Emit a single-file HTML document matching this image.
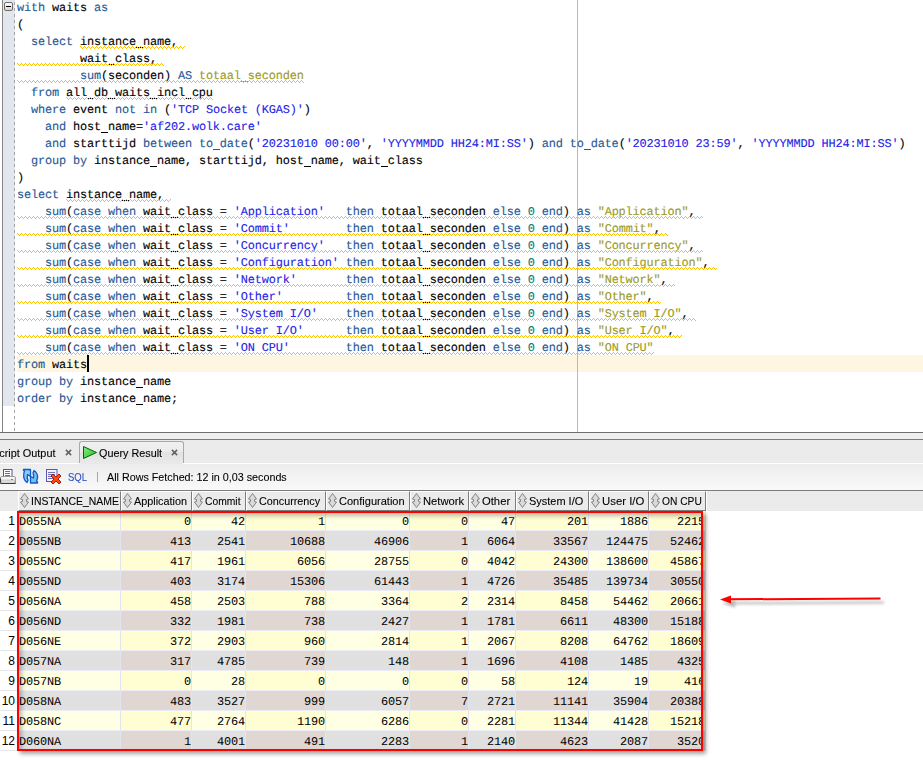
<!DOCTYPE html><html><head><meta charset="utf-8"><style>
*{margin:0;padding:0}
html,body{width:923px;height:766px;overflow:hidden;background:#fff;position:relative}
.abs{position:absolute}
.st{font-family:"Liberation Sans",sans-serif;line-height:13px;white-space:nowrap;transform-origin:0 0;-webkit-text-stroke:0.1px currentColor}
.ln{position:absolute;left:17px;height:17px;line-height:17px;white-space:pre;font-family:"Liberation Mono",monospace;font-size:11.9px;letter-spacing:-0.1412px;text-rendering:geometricPrecision;color:#000;-webkit-text-stroke:0.12px currentColor}
.hc{border-left:1px solid #fff;border-top:1px solid #fff;border-right:1px solid #7c7c7c;border-bottom:1px solid #7c7c7c;box-sizing:border-box}
.rn{left:0;width:17px;padding-right:2px;height:20px;line-height:21px;text-align:right;font-family:"Liberation Sans",sans-serif;font-size:12px;color:#000;border-bottom:1px solid #e6e6e6;box-sizing:border-box}
.cell{height:20px;line-height:20px;box-sizing:border-box;padding:1px 0 0 0;border-right:1px solid #e4e4f0;border-bottom:1px solid #ececf4;font-family:"Liberation Mono",monospace;font-size:11.9px;letter-spacing:-0.1412px;text-rendering:geometricPrecision;color:#000;white-space:pre;overflow:hidden}
</style></head><body>
<div class="abs" style="left:2px;top:0;width:1px;height:432px;background:#858585"></div>
<div class="abs" style="left:3px;top:0;width:12px;height:406px;background:#e1e6ef"></div>
<div class="abs" style="left:14px;top:0;width:1px;height:432px;background:repeating-linear-gradient(transparent 0 2px,#a4a4a4 2px 5px,transparent 5px 6px)"></div>
<div class="abs" style="left:17px;top:355px;width:906px;height:17px;background:#fff6e1"></div>
<div class="abs" style="left:577px;top:0;width:1px;height:432px;background:#b9b9b9"></div>
<div class="abs" style="left:4px;top:2px;width:9px;height:9px;box-sizing:border-box;border:1px solid #6e6e6e;border-radius:2px;background:linear-gradient(#fff,#ddd4c4)"><div class="abs" style="left:1px;top:3px;width:5px;height:1px;background:#000"></div></div>
<div class="ln" style="top:0px"><span style="color:#245896">with</span> waits <span style="color:#245896">as</span></div>
<div class="ln" style="top:17px">(</div>
<div class="ln" style="top:34px">  <span style="color:#245896">select</span> instance name,</div>
<div class="ln" style="top:51px">         wait class,</div>
<div class="ln" style="top:68px">         <span style="color:#245896">sum</span>(seconden) <span style="color:#245896">AS</span> <span style="color:#9c9a22">totaal seconden</span></div>
<div class="ln" style="top:85px">  <span style="color:#245896">from</span> all db waits incl cpu</div>
<div class="ln" style="top:102px">  <span style="color:#245896">where</span> event <span style="color:#245896">not</span> <span style="color:#245896">in</span> (<span style="color:#2222e6;-webkit-text-stroke-width:0.1px">&#x27;TCP Socket (KGAS)&#x27;</span>)</div>
<div class="ln" style="top:119px">    <span style="color:#245896">and</span> host name=<span style="color:#2222e6;-webkit-text-stroke-width:0.1px">&#x27;af202.wolk.care&#x27;</span></div>
<div class="ln" style="top:136px">    <span style="color:#245896">and</span> starttijd <span style="color:#245896">between</span> <span style="color:#245896">to date</span>(<span style="color:#2222e6;-webkit-text-stroke-width:0.1px">&#x27;20231010 00:00&#x27;</span>, <span style="color:#2222e6;-webkit-text-stroke-width:0.1px">&#x27;YYYYMMDD HH24:MI:SS&#x27;</span>) <span style="color:#245896">and</span> <span style="color:#245896">to date</span>(<span style="color:#2222e6;-webkit-text-stroke-width:0.1px">&#x27;20231010 23:59&#x27;</span>, <span style="color:#2222e6;-webkit-text-stroke-width:0.1px">&#x27;YYYYMMDD HH24:MI:SS&#x27;</span>)</div>
<div class="ln" style="top:153px">  <span style="color:#245896">group</span> <span style="color:#245896">by</span> instance name, starttijd, host name, wait class</div>
<div class="ln" style="top:170px">)</div>
<div class="ln" style="top:187px"><span style="color:#245896">select</span> instance name,</div>
<div class="ln" style="top:204px">    <span style="color:#245896">sum</span>(<span style="color:#245896">case</span> <span style="color:#245896">when</span> wait class = <span style="color:#2222e6;-webkit-text-stroke-width:0.1px">&#x27;Application&#x27;</span>   <span style="color:#245896">then</span> totaal seconden <span style="color:#245896">else</span> <span style="color:#008080">0</span> <span style="color:#245896">end</span>) <span style="color:#245896">as</span> <span style="color:#9c9a22">&quot;Application&quot;</span>,</div>
<div class="ln" style="top:221px">    <span style="color:#245896">sum</span>(<span style="color:#245896">case</span> <span style="color:#245896">when</span> wait class = <span style="color:#2222e6;-webkit-text-stroke-width:0.1px">&#x27;Commit&#x27;</span>        <span style="color:#245896">then</span> totaal seconden <span style="color:#245896">else</span> <span style="color:#008080">0</span> <span style="color:#245896">end</span>) <span style="color:#245896">as</span> <span style="color:#9c9a22">&quot;Commit&quot;</span>,</div>
<div class="ln" style="top:238px">    <span style="color:#245896">sum</span>(<span style="color:#245896">case</span> <span style="color:#245896">when</span> wait class = <span style="color:#2222e6;-webkit-text-stroke-width:0.1px">&#x27;Concurrency&#x27;</span>   <span style="color:#245896">then</span> totaal seconden <span style="color:#245896">else</span> <span style="color:#008080">0</span> <span style="color:#245896">end</span>) <span style="color:#245896">as</span> <span style="color:#9c9a22">&quot;Concurrency&quot;</span>,</div>
<div class="ln" style="top:255px">    <span style="color:#245896">sum</span>(<span style="color:#245896">case</span> <span style="color:#245896">when</span> wait class = <span style="color:#2222e6;-webkit-text-stroke-width:0.1px">&#x27;Configuration&#x27;</span> <span style="color:#245896">then</span> totaal seconden <span style="color:#245896">else</span> <span style="color:#008080">0</span> <span style="color:#245896">end</span>) <span style="color:#245896">as</span> <span style="color:#9c9a22">&quot;Configuration&quot;</span>,</div>
<div class="ln" style="top:272px">    <span style="color:#245896">sum</span>(<span style="color:#245896">case</span> <span style="color:#245896">when</span> wait class = <span style="color:#2222e6;-webkit-text-stroke-width:0.1px">&#x27;Network&#x27;</span>       <span style="color:#245896">then</span> totaal seconden <span style="color:#245896">else</span> <span style="color:#008080">0</span> <span style="color:#245896">end</span>) <span style="color:#245896">as</span> <span style="color:#9c9a22">&quot;Network&quot;</span>,</div>
<div class="ln" style="top:289px">    <span style="color:#245896">sum</span>(<span style="color:#245896">case</span> <span style="color:#245896">when</span> wait class = <span style="color:#2222e6;-webkit-text-stroke-width:0.1px">&#x27;Other&#x27;</span>         <span style="color:#245896">then</span> totaal seconden <span style="color:#245896">else</span> <span style="color:#008080">0</span> <span style="color:#245896">end</span>) <span style="color:#245896">as</span> <span style="color:#9c9a22">&quot;Other&quot;</span>,</div>
<div class="ln" style="top:306px">    <span style="color:#245896">sum</span>(<span style="color:#245896">case</span> <span style="color:#245896">when</span> wait class = <span style="color:#2222e6;-webkit-text-stroke-width:0.1px">&#x27;System I/O&#x27;</span>    <span style="color:#245896">then</span> totaal seconden <span style="color:#245896">else</span> <span style="color:#008080">0</span> <span style="color:#245896">end</span>) <span style="color:#245896">as</span> <span style="color:#9c9a22">&quot;System I/O&quot;</span>,</div>
<div class="ln" style="top:323px">    <span style="color:#245896">sum</span>(<span style="color:#245896">case</span> <span style="color:#245896">when</span> wait class = <span style="color:#2222e6;-webkit-text-stroke-width:0.1px">&#x27;User I/O&#x27;</span>      <span style="color:#245896">then</span> totaal seconden <span style="color:#245896">else</span> <span style="color:#008080">0</span> <span style="color:#245896">end</span>) <span style="color:#245896">as</span> <span style="color:#9c9a22">&quot;User I/O&quot;</span>,</div>
<div class="ln" style="top:340px">    <span style="color:#245896">sum</span>(<span style="color:#245896">case</span> <span style="color:#245896">when</span> wait class = <span style="color:#2222e6;-webkit-text-stroke-width:0.1px">&#x27;ON CPU&#x27;</span>        <span style="color:#245896">then</span> totaal seconden <span style="color:#245896">else</span> <span style="color:#008080">0</span> <span style="color:#245896">end</span>) <span style="color:#245896">as</span> <span style="color:#9c9a22">&quot;ON CPU&quot;</span></div>
<div class="ln" style="top:357px"><span style="color:#245896">from</span> waits</div>
<div class="ln" style="top:374px"><span style="color:#245896">group</span> <span style="color:#245896">by</span> instance name</div>
<div class="ln" style="top:391px"><span style="color:#245896">order</span> <span style="color:#245896">by</span> instance name;</div>
<svg class="abs" style="left:0;top:0" width="923" height="432"><path fill="#000000" d="M136 47h7v1h-7zM108 64h7v1h-7zM87 98h7v1h-7zM108 98h7v1h-7zM150 98h7v1h-7zM185 98h7v1h-7zM101 132h7v1h-7zM150 166h7v1h-7zM304 166h7v1h-7zM381 166h7v1h-7zM122 200h7v1h-7zM171 217h7v1h-7zM423 217h7v1h-7zM171 234h7v1h-7zM423 234h7v1h-7zM171 251h7v1h-7zM423 251h7v1h-7zM171 268h7v1h-7zM423 268h7v1h-7zM171 285h7v1h-7zM423 285h7v1h-7zM171 302h7v1h-7zM423 302h7v1h-7zM171 319h7v1h-7zM423 319h7v1h-7zM171 336h7v1h-7zM423 336h7v1h-7zM171 353h7v1h-7zM423 353h7v1h-7zM136 387h7v1h-7zM136 404h7v1h-7z"/><path fill="#9c9a22" d="M241 81h7v1h-7z"/><path fill="#245896" d="M213 149h7v1h-7zM584 149h7v1h-7z"/></svg>
<svg class="abs" style="left:0;top:0" width="923" height="432"><defs><pattern id="z0" patternUnits="userSpaceOnUse" width="4" height="3" x="80" y="46"><path d="M0 0h1v1H0zM1 1h1v1H1zM2 2h1v1H2zM3 1h1v1H3z" fill="#ffc000"/></pattern><pattern id="z1" patternUnits="userSpaceOnUse" width="4" height="3" x="17" y="63"><path d="M0 0h1v1H0zM1 1h1v1H1zM2 2h1v1H2zM3 1h1v1H3z" fill="#ffc000"/></pattern><pattern id="z2" patternUnits="userSpaceOnUse" width="4" height="3" x="17" y="80"><path d="M0 0h1v1H0zM1 1h1v1H1zM2 2h1v1H2zM3 1h1v1H3z" fill="#ffc000"/></pattern><pattern id="z3" patternUnits="userSpaceOnUse" width="4" height="3" x="66" y="97"><path d="M0 0h1v1H0zM1 1h1v1H1zM2 2h1v1H2zM3 1h1v1H3z" fill="#ffc000"/></pattern><pattern id="z4" patternUnits="userSpaceOnUse" width="4" height="3" x="66" y="199"><path d="M0 0h1v1H0zM1 1h1v1H1zM2 2h1v1H2zM3 1h1v1H3z" fill="#ffc000"/></pattern><pattern id="z5" patternUnits="userSpaceOnUse" width="4" height="3" x="17" y="216"><path d="M0 0h1v1H0zM1 1h1v1H1zM2 2h1v1H2zM3 1h1v1H3z" fill="#ffc000"/></pattern><pattern id="z6" patternUnits="userSpaceOnUse" width="4" height="3" x="17" y="233"><path d="M0 0h1v1H0zM1 1h1v1H1zM2 2h1v1H2zM3 1h1v1H3z" fill="#ffc000"/></pattern><pattern id="z7" patternUnits="userSpaceOnUse" width="4" height="3" x="17" y="250"><path d="M0 0h1v1H0zM1 1h1v1H1zM2 2h1v1H2zM3 1h1v1H3z" fill="#ffc000"/></pattern><pattern id="z8" patternUnits="userSpaceOnUse" width="4" height="3" x="17" y="267"><path d="M0 0h1v1H0zM1 1h1v1H1zM2 2h1v1H2zM3 1h1v1H3z" fill="#ffc000"/></pattern><pattern id="z9" patternUnits="userSpaceOnUse" width="4" height="3" x="17" y="284"><path d="M0 0h1v1H0zM1 1h1v1H1zM2 2h1v1H2zM3 1h1v1H3z" fill="#ffc000"/></pattern><pattern id="z10" patternUnits="userSpaceOnUse" width="4" height="3" x="17" y="301"><path d="M0 0h1v1H0zM1 1h1v1H1zM2 2h1v1H2zM3 1h1v1H3z" fill="#ffc000"/></pattern><pattern id="z11" patternUnits="userSpaceOnUse" width="4" height="3" x="17" y="318"><path d="M0 0h1v1H0zM1 1h1v1H1zM2 2h1v1H2zM3 1h1v1H3z" fill="#ffc000"/></pattern><pattern id="z12" patternUnits="userSpaceOnUse" width="4" height="3" x="17" y="335"><path d="M0 0h1v1H0zM1 1h1v1H1zM2 2h1v1H2zM3 1h1v1H3z" fill="#ffc000"/></pattern><pattern id="z13" patternUnits="userSpaceOnUse" width="4" height="3" x="17" y="352"><path d="M0 0h1v1H0zM1 1h1v1H1zM2 2h1v1H2zM3 1h1v1H3z" fill="#ffc000"/></pattern></defs><rect x="80" y="46" width="105" height="3" fill="url(#z0)"/><rect x="17" y="63" width="147" height="3" fill="url(#z1)"/><rect x="17" y="80" width="287" height="3" fill="url(#z2)"/><rect x="66" y="97" width="147" height="3" fill="url(#z3)"/><rect x="66" y="199" width="105" height="3" fill="url(#z4)"/><rect x="17" y="216" width="686" height="3" fill="url(#z5)"/><rect x="17" y="233" width="651" height="3" fill="url(#z6)"/><rect x="17" y="250" width="686" height="3" fill="url(#z7)"/><rect x="17" y="267" width="700" height="3" fill="url(#z8)"/><rect x="17" y="284" width="658" height="3" fill="url(#z9)"/><rect x="17" y="301" width="644" height="3" fill="url(#z10)"/><rect x="17" y="318" width="679" height="3" fill="url(#z11)"/><rect x="17" y="335" width="665" height="3" fill="url(#z12)"/><rect x="17" y="352" width="637" height="3" fill="url(#z13)"/></svg>
<div class="abs" style="left:87px;top:355px;width:2px;height:17px;background:#000"></div>
<div class="abs" style="left:0;top:432px;width:923px;height:1px;background:#6e6e6e"></div>
<div class="abs" style="left:0;top:433px;width:923px;height:6px;background:#eeeeee"></div>
<div class="abs" style="left:0;top:439px;width:923px;height:1px;background:#7a7a7a"></div>
<div class="abs" style="left:0;top:440px;width:923px;height:24px;background:#ebebeb"></div>
<div class="abs" style="left:0;top:463px;width:923px;height:1px;background:#fff"></div>
<div class="abs" style="left:0;top:464px;width:923px;height:26px;background:linear-gradient(#ececec,#f9f9f9)"></div>
<div class="abs st" style="left:-8.30px;top:447.00px;font-size:11px;color:#000;transform:scaleX(0.9889);">Script Output</div>
<div class="abs" style="left:80px;top:462px;width:103px;height:2px;background:#e9e9e9"></div>
<div class="abs" style="left:79px;top:441px;width:105px;height:22px;box-sizing:border-box;border:1px solid #a8a8a8;border-bottom:none;border-radius:3px 3px 0 0;background:linear-gradient(#f0f0f0,#ececec 45%,#e2e2e2 48%,#e9e9e9)"></div>
<div class="abs st" style="left:99.00px;top:447.00px;font-size:11px;color:#000;transform:scaleX(0.9827);">Query Result</div>
<svg class="abs" style="left:82px;top:445px" width="15" height="15"><defs><linearGradient id="gg" x1="0" y1="0" x2="1" y2="1"><stop offset="0" stop-color="#80f080"/><stop offset="1" stop-color="#30b830"/></linearGradient></defs><path d="M1.5 1.5 L14.5 7.5 L1.5 13.5 Z" fill="url(#gg)" stroke="#006400"/></svg>
<svg class="abs" style="left:65px;top:449px" width="7" height="7"><path d="M0.9 0.9 L6.1 6.1 M6.1 0.9 L0.9 6.1" stroke="#606060" stroke-width="1.5"/></svg>
<svg class="abs" style="left:171px;top:449px" width="7" height="7"><path d="M0.9 0.9 L6.1 6.1 M6.1 0.9 L0.9 6.1" stroke="#606060" stroke-width="1.5"/></svg>
<svg class="abs" style="left:0;top:468px" width="17" height="17" viewBox="0 0 17 17">
<defs><linearGradient id="pg" x1="0" y1="0" x2="0" y2="1"><stop offset="0" stop-color="#ffffff"/><stop offset=".35" stop-color="#f0f0f0"/><stop offset=".7" stop-color="#c0c0c0"/><stop offset="1" stop-color="#b0b0b0"/></linearGradient></defs>
<rect x="3.5" y="1.5" width="8.5" height="8" fill="#fff" stroke="#5050a0"/>
<path d="M5 3.5h5M5 5.5h5M5 7.5h5" stroke="#6a6ab8"/>
<path d="M0.5 10 Q0.5 8.5 2 8.5 H14 Q15.5 8.5 15.5 10 V15.5 H0.5 Z" fill="url(#pg)" stroke="#9a9a9a"/><path d="M0.5 15.5 H15.5" stroke="#3a3a3a"/><path d="M0.5 10.5 V14.5" stroke="#3a3a3a"/>
<rect x="11" y="11" width="2" height="1" fill="#20c020"/>
<path d="M2 14h12" stroke="#fafafa"/>
</svg>
<svg class="abs" style="left:21px;top:467px" width="19" height="19" viewBox="0 0 19 19">
<path d="M2.5 2.5 H9.5 V9.5 L6.5 7.5 Q5.5 10.5 7 13.5 L6 15.5 Q2 12.5 2.8 7 Q3 5 3.5 4 L2.5 3.5 Z" fill="#8ccaf8" stroke="#0a5ccc" stroke-width="1.3" stroke-linejoin="round"/>
<path d="M16.5 16 H9.5 V9.5 L12.5 11 Q13 8 12 6 L13 3.5 Q17 6 16.5 11 Q16 13 15.5 14 L16.5 15 Z" fill="#78bef6" stroke="#0a5ccc" stroke-width="1.3" stroke-linejoin="round"/>
</svg>
<svg class="abs" style="left:45px;top:468px" width="18" height="17" viewBox="0 0 18 17">
<rect x="1.5" y="1.5" width="10.5" height="12" fill="#f2f2fc" stroke="#5a5aa8"/>
<path d="M3 4.5h7M3 6.5h7M3 8.5h6M3 10.5h5" stroke="#7070bc"/>
<path d="M6 8 L8 6 L11 9 L14 6 L16 8 L13 11 L16 14 L14 16 L11 13 L8 16 L6 14 L9 11 Z" fill="#ff4a10" stroke="#9a1000" stroke-width="0.9" stroke-linejoin="round"/>
</svg>
<div class="abs st" style="left:68.00px;top:471.00px;font-size:11px;color:#2d4fc0;transform:scaleX(0.8638);">SQL</div>
<div class="abs" style="left:97px;top:472px;width:1px;height:10px;background:#a8a8a8"></div>
<div class="abs st" style="left:107.30px;top:471.00px;font-size:11px;color:#000;transform:scaleX(0.9765);">All Rows Fetched: 12 in 0,03 seconds</div>
<div class="abs" style="left:0;top:490px;width:923px;height:21px;background:#ebebeb;border-top:1px solid #7c7c7c;box-sizing:border-box"></div>
<div class="abs" style="left:706px;top:491px;width:1px;height:20px;background:#fff"></div>
<div class="abs hc" style="left:18px;top:491px;width:103px;height:20px"></div>
<svg class="abs" style="left:20px;top:492px" width="10" height="18"><path d="M4.5 1.5 L8.5 7 L6.5 7.5 L6.5 9.5 L8.5 10 L4.5 15.5 L0.5 10 L2.5 9.5 L2.5 7.5 L0.5 7 Z" fill="#dadada" stroke="#7a7a7a" stroke-width="0.9"/></svg>
<div class="abs st" style="left:31.00px;top:495.00px;font-size:11px;color:#000;transform:scaleX(0.9487);">INSTANCE_NAME</div>
<div class="abs hc" style="left:121px;top:491px;width:71px;height:20px"></div>
<svg class="abs" style="left:123px;top:492px" width="10" height="18"><path d="M4.5 1.5 L8.5 7 L6.5 7.5 L6.5 9.5 L8.5 10 L4.5 15.5 L0.5 10 L2.5 9.5 L2.5 7.5 L0.5 7 Z" fill="#dadada" stroke="#7a7a7a" stroke-width="0.9"/></svg>
<div class="abs st" style="left:134.30px;top:495.00px;font-size:11px;color:#000;transform:scaleX(0.9848);">Application</div>
<div class="abs hc" style="left:192px;top:491px;width:54px;height:20px"></div>
<svg class="abs" style="left:194px;top:492px" width="10" height="18"><path d="M4.5 1.5 L8.5 7 L6.5 7.5 L6.5 9.5 L8.5 10 L4.5 15.5 L0.5 10 L2.5 9.5 L2.5 7.5 L0.5 7 Z" fill="#dadada" stroke="#7a7a7a" stroke-width="0.9"/></svg>
<div class="abs st" style="left:204.90px;top:495.00px;font-size:11px;color:#000;transform:scaleX(0.9377);">Commit</div>
<div class="abs hc" style="left:246px;top:491px;width:80px;height:20px"></div>
<svg class="abs" style="left:248px;top:492px" width="10" height="18"><path d="M4.5 1.5 L8.5 7 L6.5 7.5 L6.5 9.5 L8.5 10 L4.5 15.5 L0.5 10 L2.5 9.5 L2.5 7.5 L0.5 7 Z" fill="#dadada" stroke="#7a7a7a" stroke-width="0.9"/></svg>
<div class="abs st" style="left:259.00px;top:495.00px;font-size:11px;color:#000;transform:scaleX(0.9805);">Concurrency</div>
<div class="abs hc" style="left:326px;top:491px;width:84px;height:20px"></div>
<svg class="abs" style="left:328px;top:492px" width="10" height="18"><path d="M4.5 1.5 L8.5 7 L6.5 7.5 L6.5 9.5 L8.5 10 L4.5 15.5 L0.5 10 L2.5 9.5 L2.5 7.5 L0.5 7 Z" fill="#dadada" stroke="#7a7a7a" stroke-width="0.9"/></svg>
<div class="abs st" style="left:338.70px;top:495.00px;font-size:11px;color:#000;transform:scaleX(1.0031);">Configuration</div>
<div class="abs hc" style="left:410px;top:491px;width:59px;height:20px"></div>
<svg class="abs" style="left:412px;top:492px" width="10" height="18"><path d="M4.5 1.5 L8.5 7 L6.5 7.5 L6.5 9.5 L8.5 10 L4.5 15.5 L0.5 10 L2.5 9.5 L2.5 7.5 L0.5 7 Z" fill="#dadada" stroke="#7a7a7a" stroke-width="0.9"/></svg>
<div class="abs st" style="left:422.80px;top:495.00px;font-size:11px;color:#000;transform:scaleX(1.0204);">Network</div>
<div class="abs hc" style="left:469px;top:491px;width:47px;height:20px"></div>
<svg class="abs" style="left:471px;top:492px" width="10" height="18"><path d="M4.5 1.5 L8.5 7 L6.5 7.5 L6.5 9.5 L8.5 10 L4.5 15.5 L0.5 10 L2.5 9.5 L2.5 7.5 L0.5 7 Z" fill="#dadada" stroke="#7a7a7a" stroke-width="0.9"/></svg>
<div class="abs st" style="left:481.90px;top:495.00px;font-size:11px;color:#000;transform:scaleX(1.0226);">Other</div>
<div class="abs hc" style="left:516px;top:491px;width:73px;height:20px"></div>
<svg class="abs" style="left:518px;top:492px" width="10" height="18"><path d="M4.5 1.5 L8.5 7 L6.5 7.5 L6.5 9.5 L8.5 10 L4.5 15.5 L0.5 10 L2.5 9.5 L2.5 7.5 L0.5 7 Z" fill="#dadada" stroke="#7a7a7a" stroke-width="0.9"/></svg>
<div class="abs st" style="left:529.00px;top:495.00px;font-size:11px;color:#000;transform:scaleX(0.9963);">System I/O</div>
<div class="abs hc" style="left:589px;top:491px;width:60px;height:20px"></div>
<svg class="abs" style="left:591px;top:492px" width="10" height="18"><path d="M4.5 1.5 L8.5 7 L6.5 7.5 L6.5 9.5 L8.5 10 L4.5 15.5 L0.5 10 L2.5 9.5 L2.5 7.5 L0.5 7 Z" fill="#dadada" stroke="#7a7a7a" stroke-width="0.9"/></svg>
<div class="abs st" style="left:601.70px;top:495.00px;font-size:11px;color:#000;transform:scaleX(1.0326);">User I/O</div>
<div class="abs hc" style="left:649px;top:491px;width:57px;height:20px"></div>
<svg class="abs" style="left:651px;top:492px" width="10" height="18"><path d="M4.5 1.5 L8.5 7 L6.5 7.5 L6.5 9.5 L8.5 10 L4.5 15.5 L0.5 10 L2.5 9.5 L2.5 7.5 L0.5 7 Z" fill="#dadada" stroke="#7a7a7a" stroke-width="0.9"/></svg>
<div class="abs st" style="left:661.90px;top:495.00px;font-size:11px;color:#000;transform:scaleX(0.9306);">ON CPU</div>
<div class="abs rn" style="top:511px">1</div>
<div class="abs cell" style="left:19px;top:511px;width:102px;background:#ffffe4;text-align:left">D055NA</div>
<div class="abs cell" style="left:121px;top:511px;width:71px;background:#fffdd2;text-align:right">0</div>
<div class="abs cell" style="left:192px;top:511px;width:54px;background:#ffffe4;text-align:right">42</div>
<div class="abs cell" style="left:246px;top:511px;width:80px;background:#fffdd2;text-align:right">1</div>
<div class="abs cell" style="left:326px;top:511px;width:84px;background:#ffffe4;text-align:right">0</div>
<div class="abs cell" style="left:410px;top:511px;width:59px;background:#fffdd2;text-align:right">0</div>
<div class="abs cell" style="left:469px;top:511px;width:47px;background:#ffffe4;text-align:right">47</div>
<div class="abs cell" style="left:516px;top:511px;width:73px;background:#fffdd2;text-align:right">201</div>
<div class="abs cell" style="left:589px;top:511px;width:60px;background:#ffffe4;text-align:right">1886</div>
<div class="abs cell" style="left:649px;top:511px;width:57px;background:#fffdd2"></div>
<div class="abs" style="left:649px;top:511px;width:52px;height:20px;overflow:hidden"><div class="abs cell" style="left:0;top:0;width:57px;background:#fffdd2;text-align:right">2215</div></div>
<div class="abs rn" style="top:531px">2</div>
<div class="abs cell" style="left:19px;top:531px;width:102px;background:#e0e0e0;text-align:left">D055NB</div>
<div class="abs cell" style="left:121px;top:531px;width:71px;background:#e0d7d3;text-align:right">413</div>
<div class="abs cell" style="left:192px;top:531px;width:54px;background:#e0e0e0;text-align:right">2541</div>
<div class="abs cell" style="left:246px;top:531px;width:80px;background:#e0d7d3;text-align:right">10688</div>
<div class="abs cell" style="left:326px;top:531px;width:84px;background:#e0e0e0;text-align:right">46906</div>
<div class="abs cell" style="left:410px;top:531px;width:59px;background:#e0d7d3;text-align:right">1</div>
<div class="abs cell" style="left:469px;top:531px;width:47px;background:#e0e0e0;text-align:right">6064</div>
<div class="abs cell" style="left:516px;top:531px;width:73px;background:#e0d7d3;text-align:right">33567</div>
<div class="abs cell" style="left:589px;top:531px;width:60px;background:#e0e0e0;text-align:right">124475</div>
<div class="abs cell" style="left:649px;top:531px;width:57px;background:#e0d7d3"></div>
<div class="abs" style="left:649px;top:531px;width:52px;height:20px;overflow:hidden"><div class="abs cell" style="left:0;top:0;width:57px;background:#e0d7d3;text-align:right">52462</div></div>
<div class="abs rn" style="top:551px">3</div>
<div class="abs cell" style="left:19px;top:551px;width:102px;background:#ffffe4;text-align:left">D055NC</div>
<div class="abs cell" style="left:121px;top:551px;width:71px;background:#fffdd2;text-align:right">417</div>
<div class="abs cell" style="left:192px;top:551px;width:54px;background:#ffffe4;text-align:right">1961</div>
<div class="abs cell" style="left:246px;top:551px;width:80px;background:#fffdd2;text-align:right">6056</div>
<div class="abs cell" style="left:326px;top:551px;width:84px;background:#ffffe4;text-align:right">28755</div>
<div class="abs cell" style="left:410px;top:551px;width:59px;background:#fffdd2;text-align:right">0</div>
<div class="abs cell" style="left:469px;top:551px;width:47px;background:#ffffe4;text-align:right">4042</div>
<div class="abs cell" style="left:516px;top:551px;width:73px;background:#fffdd2;text-align:right">24300</div>
<div class="abs cell" style="left:589px;top:551px;width:60px;background:#ffffe4;text-align:right">138600</div>
<div class="abs cell" style="left:649px;top:551px;width:57px;background:#fffdd2"></div>
<div class="abs" style="left:649px;top:551px;width:52px;height:20px;overflow:hidden"><div class="abs cell" style="left:0;top:0;width:57px;background:#fffdd2;text-align:right">45867</div></div>
<div class="abs rn" style="top:571px">4</div>
<div class="abs cell" style="left:19px;top:571px;width:102px;background:#e0e0e0;text-align:left">D055ND</div>
<div class="abs cell" style="left:121px;top:571px;width:71px;background:#e0d7d3;text-align:right">403</div>
<div class="abs cell" style="left:192px;top:571px;width:54px;background:#e0e0e0;text-align:right">3174</div>
<div class="abs cell" style="left:246px;top:571px;width:80px;background:#e0d7d3;text-align:right">15306</div>
<div class="abs cell" style="left:326px;top:571px;width:84px;background:#e0e0e0;text-align:right">61443</div>
<div class="abs cell" style="left:410px;top:571px;width:59px;background:#e0d7d3;text-align:right">1</div>
<div class="abs cell" style="left:469px;top:571px;width:47px;background:#e0e0e0;text-align:right">4726</div>
<div class="abs cell" style="left:516px;top:571px;width:73px;background:#e0d7d3;text-align:right">35485</div>
<div class="abs cell" style="left:589px;top:571px;width:60px;background:#e0e0e0;text-align:right">139734</div>
<div class="abs cell" style="left:649px;top:571px;width:57px;background:#e0d7d3"></div>
<div class="abs" style="left:649px;top:571px;width:52px;height:20px;overflow:hidden"><div class="abs cell" style="left:0;top:0;width:57px;background:#e0d7d3;text-align:right">30550</div></div>
<div class="abs rn" style="top:591px">5</div>
<div class="abs cell" style="left:19px;top:591px;width:102px;background:#ffffe4;text-align:left">D056NA</div>
<div class="abs cell" style="left:121px;top:591px;width:71px;background:#fffdd2;text-align:right">458</div>
<div class="abs cell" style="left:192px;top:591px;width:54px;background:#ffffe4;text-align:right">2503</div>
<div class="abs cell" style="left:246px;top:591px;width:80px;background:#fffdd2;text-align:right">788</div>
<div class="abs cell" style="left:326px;top:591px;width:84px;background:#ffffe4;text-align:right">3364</div>
<div class="abs cell" style="left:410px;top:591px;width:59px;background:#fffdd2;text-align:right">2</div>
<div class="abs cell" style="left:469px;top:591px;width:47px;background:#ffffe4;text-align:right">2314</div>
<div class="abs cell" style="left:516px;top:591px;width:73px;background:#fffdd2;text-align:right">8458</div>
<div class="abs cell" style="left:589px;top:591px;width:60px;background:#ffffe4;text-align:right">54462</div>
<div class="abs cell" style="left:649px;top:591px;width:57px;background:#fffdd2"></div>
<div class="abs" style="left:649px;top:591px;width:52px;height:20px;overflow:hidden"><div class="abs cell" style="left:0;top:0;width:57px;background:#fffdd2;text-align:right">20661</div></div>
<div class="abs rn" style="top:611px">6</div>
<div class="abs cell" style="left:19px;top:611px;width:102px;background:#e0e0e0;text-align:left">D056ND</div>
<div class="abs cell" style="left:121px;top:611px;width:71px;background:#e0d7d3;text-align:right">332</div>
<div class="abs cell" style="left:192px;top:611px;width:54px;background:#e0e0e0;text-align:right">1981</div>
<div class="abs cell" style="left:246px;top:611px;width:80px;background:#e0d7d3;text-align:right">738</div>
<div class="abs cell" style="left:326px;top:611px;width:84px;background:#e0e0e0;text-align:right">2427</div>
<div class="abs cell" style="left:410px;top:611px;width:59px;background:#e0d7d3;text-align:right">1</div>
<div class="abs cell" style="left:469px;top:611px;width:47px;background:#e0e0e0;text-align:right">1781</div>
<div class="abs cell" style="left:516px;top:611px;width:73px;background:#e0d7d3;text-align:right">6611</div>
<div class="abs cell" style="left:589px;top:611px;width:60px;background:#e0e0e0;text-align:right">48300</div>
<div class="abs cell" style="left:649px;top:611px;width:57px;background:#e0d7d3"></div>
<div class="abs" style="left:649px;top:611px;width:52px;height:20px;overflow:hidden"><div class="abs cell" style="left:0;top:0;width:57px;background:#e0d7d3;text-align:right">15188</div></div>
<div class="abs rn" style="top:631px">7</div>
<div class="abs cell" style="left:19px;top:631px;width:102px;background:#ffffe4;text-align:left">D056NE</div>
<div class="abs cell" style="left:121px;top:631px;width:71px;background:#fffdd2;text-align:right">372</div>
<div class="abs cell" style="left:192px;top:631px;width:54px;background:#ffffe4;text-align:right">2903</div>
<div class="abs cell" style="left:246px;top:631px;width:80px;background:#fffdd2;text-align:right">960</div>
<div class="abs cell" style="left:326px;top:631px;width:84px;background:#ffffe4;text-align:right">2814</div>
<div class="abs cell" style="left:410px;top:631px;width:59px;background:#fffdd2;text-align:right">1</div>
<div class="abs cell" style="left:469px;top:631px;width:47px;background:#ffffe4;text-align:right">2067</div>
<div class="abs cell" style="left:516px;top:631px;width:73px;background:#fffdd2;text-align:right">8208</div>
<div class="abs cell" style="left:589px;top:631px;width:60px;background:#ffffe4;text-align:right">64762</div>
<div class="abs cell" style="left:649px;top:631px;width:57px;background:#fffdd2"></div>
<div class="abs" style="left:649px;top:631px;width:52px;height:20px;overflow:hidden"><div class="abs cell" style="left:0;top:0;width:57px;background:#fffdd2;text-align:right">18609</div></div>
<div class="abs rn" style="top:651px">8</div>
<div class="abs cell" style="left:19px;top:651px;width:102px;background:#e0e0e0;text-align:left">D057NA</div>
<div class="abs cell" style="left:121px;top:651px;width:71px;background:#e0d7d3;text-align:right">317</div>
<div class="abs cell" style="left:192px;top:651px;width:54px;background:#e0e0e0;text-align:right">4785</div>
<div class="abs cell" style="left:246px;top:651px;width:80px;background:#e0d7d3;text-align:right">739</div>
<div class="abs cell" style="left:326px;top:651px;width:84px;background:#e0e0e0;text-align:right">148</div>
<div class="abs cell" style="left:410px;top:651px;width:59px;background:#e0d7d3;text-align:right">1</div>
<div class="abs cell" style="left:469px;top:651px;width:47px;background:#e0e0e0;text-align:right">1696</div>
<div class="abs cell" style="left:516px;top:651px;width:73px;background:#e0d7d3;text-align:right">4108</div>
<div class="abs cell" style="left:589px;top:651px;width:60px;background:#e0e0e0;text-align:right">1485</div>
<div class="abs cell" style="left:649px;top:651px;width:57px;background:#e0d7d3"></div>
<div class="abs" style="left:649px;top:651px;width:52px;height:20px;overflow:hidden"><div class="abs cell" style="left:0;top:0;width:57px;background:#e0d7d3;text-align:right">4325</div></div>
<div class="abs rn" style="top:671px">9</div>
<div class="abs cell" style="left:19px;top:671px;width:102px;background:#ffffe4;text-align:left">D057NB</div>
<div class="abs cell" style="left:121px;top:671px;width:71px;background:#fffdd2;text-align:right">0</div>
<div class="abs cell" style="left:192px;top:671px;width:54px;background:#ffffe4;text-align:right">28</div>
<div class="abs cell" style="left:246px;top:671px;width:80px;background:#fffdd2;text-align:right">0</div>
<div class="abs cell" style="left:326px;top:671px;width:84px;background:#ffffe4;text-align:right">0</div>
<div class="abs cell" style="left:410px;top:671px;width:59px;background:#fffdd2;text-align:right">0</div>
<div class="abs cell" style="left:469px;top:671px;width:47px;background:#ffffe4;text-align:right">58</div>
<div class="abs cell" style="left:516px;top:671px;width:73px;background:#fffdd2;text-align:right">124</div>
<div class="abs cell" style="left:589px;top:671px;width:60px;background:#ffffe4;text-align:right">19</div>
<div class="abs cell" style="left:649px;top:671px;width:57px;background:#fffdd2"></div>
<div class="abs" style="left:649px;top:671px;width:52px;height:20px;overflow:hidden"><div class="abs cell" style="left:0;top:0;width:57px;background:#fffdd2;text-align:right">416</div></div>
<div class="abs rn" style="top:691px">10</div>
<div class="abs cell" style="left:19px;top:691px;width:102px;background:#e0e0e0;text-align:left">D058NA</div>
<div class="abs cell" style="left:121px;top:691px;width:71px;background:#e0d7d3;text-align:right">483</div>
<div class="abs cell" style="left:192px;top:691px;width:54px;background:#e0e0e0;text-align:right">3527</div>
<div class="abs cell" style="left:246px;top:691px;width:80px;background:#e0d7d3;text-align:right">999</div>
<div class="abs cell" style="left:326px;top:691px;width:84px;background:#e0e0e0;text-align:right">6057</div>
<div class="abs cell" style="left:410px;top:691px;width:59px;background:#e0d7d3;text-align:right">7</div>
<div class="abs cell" style="left:469px;top:691px;width:47px;background:#e0e0e0;text-align:right">2721</div>
<div class="abs cell" style="left:516px;top:691px;width:73px;background:#e0d7d3;text-align:right">11141</div>
<div class="abs cell" style="left:589px;top:691px;width:60px;background:#e0e0e0;text-align:right">35904</div>
<div class="abs cell" style="left:649px;top:691px;width:57px;background:#e0d7d3"></div>
<div class="abs" style="left:649px;top:691px;width:52px;height:20px;overflow:hidden"><div class="abs cell" style="left:0;top:0;width:57px;background:#e0d7d3;text-align:right">20388</div></div>
<div class="abs rn" style="top:711px">11</div>
<div class="abs cell" style="left:19px;top:711px;width:102px;background:#ffffe4;text-align:left">D058NC</div>
<div class="abs cell" style="left:121px;top:711px;width:71px;background:#fffdd2;text-align:right">477</div>
<div class="abs cell" style="left:192px;top:711px;width:54px;background:#ffffe4;text-align:right">2764</div>
<div class="abs cell" style="left:246px;top:711px;width:80px;background:#fffdd2;text-align:right">1190</div>
<div class="abs cell" style="left:326px;top:711px;width:84px;background:#ffffe4;text-align:right">6286</div>
<div class="abs cell" style="left:410px;top:711px;width:59px;background:#fffdd2;text-align:right">0</div>
<div class="abs cell" style="left:469px;top:711px;width:47px;background:#ffffe4;text-align:right">2281</div>
<div class="abs cell" style="left:516px;top:711px;width:73px;background:#fffdd2;text-align:right">11344</div>
<div class="abs cell" style="left:589px;top:711px;width:60px;background:#ffffe4;text-align:right">41428</div>
<div class="abs cell" style="left:649px;top:711px;width:57px;background:#fffdd2"></div>
<div class="abs" style="left:649px;top:711px;width:52px;height:20px;overflow:hidden"><div class="abs cell" style="left:0;top:0;width:57px;background:#fffdd2;text-align:right">15218</div></div>
<div class="abs rn" style="top:731px">12</div>
<div class="abs cell" style="left:19px;top:731px;width:102px;background:#e0e0e0;text-align:left">D060NA</div>
<div class="abs cell" style="left:121px;top:731px;width:71px;background:#e0d7d3;text-align:right">1</div>
<div class="abs cell" style="left:192px;top:731px;width:54px;background:#e0e0e0;text-align:right">4001</div>
<div class="abs cell" style="left:246px;top:731px;width:80px;background:#e0d7d3;text-align:right">491</div>
<div class="abs cell" style="left:326px;top:731px;width:84px;background:#e0e0e0;text-align:right">2283</div>
<div class="abs cell" style="left:410px;top:731px;width:59px;background:#e0d7d3;text-align:right">1</div>
<div class="abs cell" style="left:469px;top:731px;width:47px;background:#e0e0e0;text-align:right">2140</div>
<div class="abs cell" style="left:516px;top:731px;width:73px;background:#e0d7d3;text-align:right">4623</div>
<div class="abs cell" style="left:589px;top:731px;width:60px;background:#e0e0e0;text-align:right">2087</div>
<div class="abs cell" style="left:649px;top:731px;width:57px;background:#e0d7d3"></div>
<div class="abs" style="left:649px;top:731px;width:52px;height:20px;overflow:hidden"><div class="abs cell" style="left:0;top:0;width:57px;background:#e0d7d3;text-align:right">3520</div></div>
<div class="abs" style="left:17px;top:511px;width:686px;height:240px;box-sizing:border-box;border:2px solid #ff0000;box-shadow:3px 3px 4px rgba(0,0,0,.35), inset 3px 3px 4px rgba(0,0,0,.25)"></div>
<svg class="abs" style="left:700px;top:580px" width="200" height="40"><defs><filter id="bl"><feGaussianBlur stdDeviation="1.5"/></filter></defs><g transform="translate(4,4)" opacity=".3" filter="url(#bl)"><path d="M20 19.3 L180 18.6" stroke="#000" stroke-width="2"/><path d="M20 19.5 L31 15.5 L31 23.5 Z" fill="#000"/></g><path d="M25 19.3 L180.5 18.6" stroke="#ff0000" stroke-width="2"/><path d="M20 19.5 L31 15.5 L31 23.5 Z" fill="#ff0000"/></svg>
</body></html>
